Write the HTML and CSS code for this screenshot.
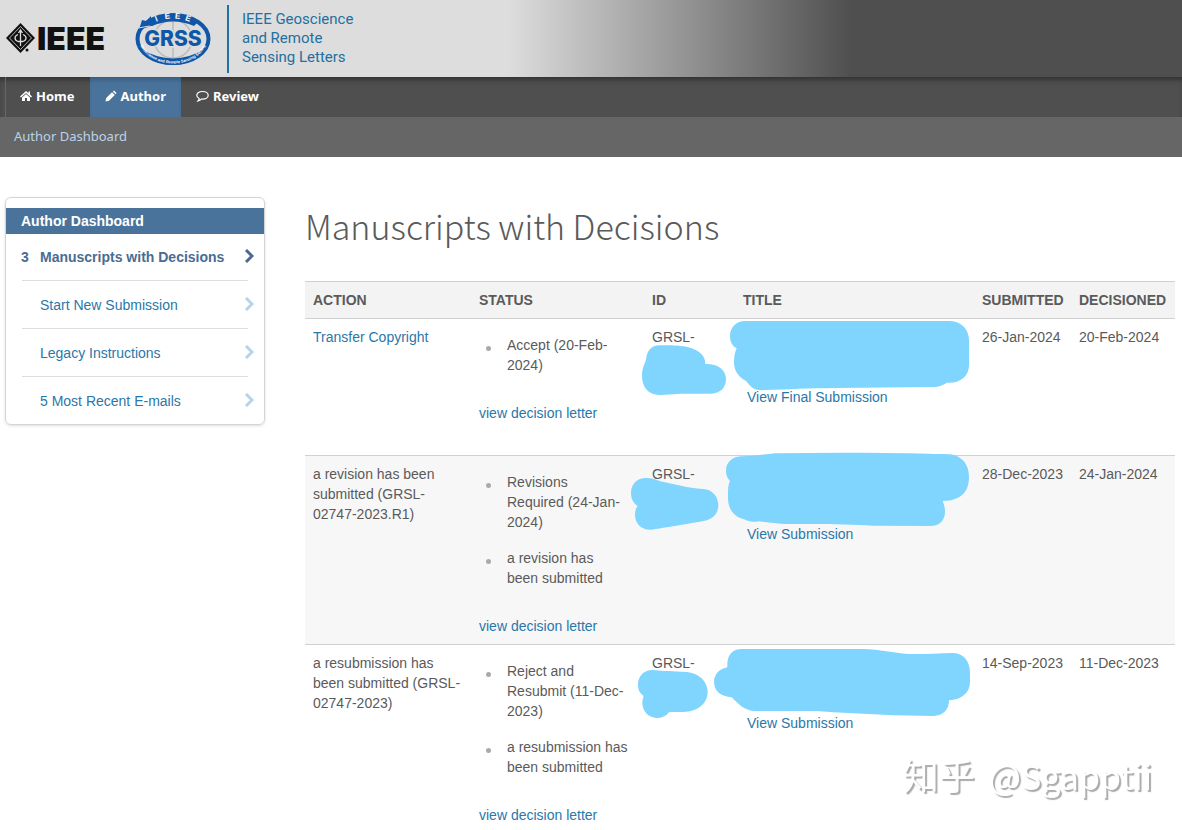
FILE: index.html
```html
<!DOCTYPE html>
<html lang="en">

<head>
    <meta charset="UTF-8">
    <meta name="viewport" content="width=device-width, initial-scale=1.0">
    <title>Manuscripts with Decisions</title>
    <link rel="stylesheet" href="styles.css">
</head>

<body>
    <header class="banner">
        <svg class="ieee-logo" width="106" height="44" viewBox="0 -5 106 44" role="img" aria-label="IEEE">
            <path d="M15.500 1 L30 16 L15.500 31 L1 16 Z" fill="#111"/>
            <path d="M15.500 4.500 L26.500 16 L15.500 27.500 L4.500 16 Z" fill="none" stroke="#ddd" stroke-width="0.800"/>
            <path d="M15.500 9 V24 M13.500 11 L15.500 8 L17.500 11 M13 12.500 C9 14 9 18 13 19.500 L18 19.500 C22 18 22 14 18 12.500" fill="none" stroke="#ddd" stroke-width="1.300"/>
            <circle cx="22" cy="28" r="1.500" fill="#111"/>
            <text class="ieee-text" x="32" y="28">IEEE</text>
        </svg>
        <svg class="grss-logo" width="78" height="56" viewBox="0 0 78 56" role="img" aria-label="GRSS">
            <defs>
                <path id="arc-top" d="M9 27 A30 19.500 0 0 1 69 27"/>
                <path id="arc-bottom" d="M5 27 A34 25.500 0 0 0 73 27"/>
            </defs>
            <ellipse cx="39" cy="28" rx="35.500" ry="24" fill="#ddd" stroke="#1057a7" stroke-width="4"/>
            <g fill="none" stroke="#bbb" stroke-width="1.500">
                <ellipse cx="39" cy="28" rx="19" ry="19"/>
                <path d="M39 8 V48 M20 28 H58"/>
            </g>
            <path d="M14 11 Q39 -2 64 11 L60 15 Q39 6 18 15 Z" fill="#1057a7"/>
            <path d="M5 19 L8 9 L12 10 L17 5 L17 11 L20 14 Z" fill="#1057a7"/>
            <path d="M4 17 L16 15" stroke="#ddd" stroke-width="1"/>
            <path d="M6 37 Q39 58 72 37 Q62 53 39 54 Q16 53 6 37 Z" fill="#1057a7"/>
            <text class="arc-text"><textPath href="#arc-top" startOffset="50%" text-anchor="middle">I&#160; &#160;E&#160; E&#160; E</textPath></text>
            <text class="grss-text" x="39" y="35" text-anchor="middle">GRSS</text>
            <text class="arc-small"><textPath href="#arc-bottom" startOffset="50%" text-anchor="middle">Geoscience and Remote Sensing Society</textPath></text>
        </svg>
        <div class="journal">IEEE Geoscience<br>and Remote<br>Sensing Letters</div>
    </header>

    <nav class="main-nav">
        <a class="nav-item" href="#">
            <svg width="12" height="12" viewBox="0 0 12 12"><path d="M6 1 L0 6.500 L1 7.500 L6 3 L11 7.500 L12 6.500 L10 4.500 V1.500 H8.500 V3.200 Z M6 4 L2 7.500 V11 H5 V8 H7 V11 H10 V7.500 Z" fill="currentColor"/></svg>
            Home
        </a>
        <a class="nav-item active" href="#">
            <svg width="12" height="12" viewBox="0 0 12 12"><path d="M0.500 11.500 L1.200 8 L7 2.200 L9.800 5 L4 10.800 Z M7.800 1.400 L9 0.500 L11.500 3 L10.600 4.200 Z" fill="currentColor"/></svg>
            Author
        </a>
        <a class="nav-item" href="#">
            <svg width="13" height="12" viewBox="0 0 13 12"><path d="M6.500 1.500 C9.800 1.500 12.200 3.200 12.200 5.300 C12.200 7.500 9.800 9.200 6.500 9.200 L5.300 9.100 Q4 10.600 2 11 Q3.200 9.600 3.100 8.500 C1.600 7.800 0.800 6.600 0.800 5.300 C0.800 3.200 3.200 1.500 6.500 1.500 Z" fill="none" stroke="currentColor" stroke-width="1.200"/></svg>
            Review
        </a>
    </nav>
    <div class="sub-nav"><a href="#">Author Dashboard</a></div>

    <div class="page">
        <aside class="sidebar">
            <h2>Author Dashboard</h2>
            <ul class="queue-list">
                <li><a class="current" href="#"><span class="count">3</span><span class="label">Manuscripts with Decisions</span><svg width="10" height="14" viewBox="0 0 10 14"><path d="M2 1 L8 7 L2 13"/></svg></a></li>
                <li><a href="#"><span class="count"></span><span class="label">Start New Submission</span><svg width="10" height="14" viewBox="0 0 10 14"><path d="M2 1 L8 7 L2 13"/></svg></a></li>
                <li><a href="#"><span class="count"></span><span class="label">Legacy Instructions</span><svg width="10" height="14" viewBox="0 0 10 14"><path d="M2 1 L8 7 L2 13"/></svg></a></li>
                <li><a href="#"><span class="count"></span><span class="label">5 Most Recent E-mails</span><svg width="10" height="14" viewBox="0 0 10 14"><path d="M2 1 L8 7 L2 13"/></svg></a></li>
            </ul>
        </aside>

        <main class="content">
            <h1>Manuscripts with Decisions</h1>
            <table class="manuscripts">
                <colgroup>
                    <col class="col-action">
                    <col class="col-status">
                    <col class="col-id">
                    <col>
                    <col class="col-submitted">
                    <col class="col-decisioned">
                </colgroup>
                <thead>
                    <tr>
                        <th>ACTION</th>
                        <th>STATUS</th>
                        <th>ID</th>
                        <th>TITLE</th>
                        <th>SUBMITTED</th>
                        <th>DECISIONED</th>
                    </tr>
                </thead>
                <tbody>
                    <tr>
                        <td><a href="#">Transfer Copyright</a></td>
                        <td>
                            <ul class="status-list">
                                <li>Accept (20-Feb-2024)</li>
                            </ul>
                            <a href="#">view decision letter</a>
                        </td>
                        <td>
                            GRSL-
                            <div class="hidden-id">
                                <svg width="100" height="60" viewBox="24 81 300 180"><path d="M118 106 C160 105 190 106 215 115 C240 124 256 138 256 162 C290 160 318 178 318 207 C318 236 298 251 270 251 L180 251 C150 253 130 256 110 254 C82 251 66 228 66 198 C66 175 73 163 78 150 C80 122 94 107 118 106 Z"/></svg>
                            </div>
                        </td>
                        <td>
                            <div class="hidden-title">
                                <svg width="260" height="90" viewBox="279 9 780 270"><path d="M376 33 H986 C1022 33 1047 56 1047 90 V165 C1047 198 1022 221 980 218 C965 228 955 231 935 231 L650 234 C570 235 500 238 435 240 C402 244 392 230 378 213 C354 200 342 180 342 158 C342 140 344 128 350 115 C335 106 330 94 330 78 C330 52 348 33 376 33 Z"/></svg>
                            </div>
                            <a class="view-link" href="#">View Final Submission</a>
                        </td>
                        <td>26-Jan-2024</td>
                        <td>20-Feb-2024</td>
                    </tr>
                    <tr>
                        <td>a revision has been submitted (GRSL-02747-2023.R1)</td>
                        <td>
                            <ul class="status-list">
                                <li>Revisions Required (24-Jan-2024)</li>
                                <li>a revision has been submitted</li>
                            </ul>
                            <a href="#">view decision letter</a>
                        </td>
                        <td>
                            GRSL-
                            <div class="hidden-id">
                                <svg width="100" height="60" viewBox="24 87 300 180"><path d="M78 99 C100 98 115 108 135 112 L200 126 C220 130 235 131 250 132 C278 134 295 155 295 181 C295 206 278 222 252 228 L160 244 C130 248 112 253 92 254 C64 255 45 236 45 210 C45 198 47 190 53 183 C38 172 33 160 33 143 C33 117 52 99 78 99 Z"/></svg>
                            </div>
                        </td>
                        <td>
                            <div class="hidden-title">
                                <svg width="260" height="90" viewBox="279 15 780 270"><path d="M366 34 C400 33 430 28 465 25 C620 22 780 23 930 26 C960 28 970 26 990 28 C1025 32 1047 58 1047 95 C1047 140 1025 166 968 168 C972 178 975 188 975 200 C975 224 960 243 930 243 L760 242 C700 239 640 237 590 237 L490 237 L415 229 C398 233 385 229 372 223 C340 215 324 190 324 160 C324 140 323 122 330 108 C320 98 318 88 318 76 C318 52 338 34 366 34 Z"/></svg>
                            </div>
                            <a class="view-link" href="#">View Submission</a>
                        </td>
                        <td>28-Dec-2023</td>
                        <td>24-Jan-2024</td>
                    </tr>
                    <tr>
                        <td>a resubmission has been submitted (GRSL-02747-2023)</td>
                        <td>
                            <ul class="status-list">
                                <li>Reject and Resubmit (11-Dec-2023)</li>
                                <li>a resubmission has been submitted</li>
                            </ul>
                            <a href="#">view decision letter</a>
                        </td>
                        <td>
                            GRSL-
                            <div class="hidden-id">
                                <svg width="100" height="60" viewBox="24 69 300 180"><path d="M98 90 C130 93 160 94 200 96 C236 99 263 124 263 156 C263 190 234 215 190 216 L148 216 C138 228 126 234 110 234 C84 233 68 214 67 190 C67 180 69 174 71 168 C58 158 54 148 54 134 C54 108 72 90 98 90 Z"/></svg>
                            </div>
                        </td>
                        <td>
                            <div class="hidden-title">
                                <svg width="260" height="90" viewBox="279 -3 780 270"><path d="M366 27 H730 C780 29 820 38 865 42 C910 43 950 40 1000 39 C1032 41 1050 64 1050 98 V125 C1050 158 1026 178 987 181 C987 210 970 227 940 228 L820 226 L640 217 L590 213 H405 C375 213 358 195 335 172 C302 170 282 152 282 126 C282 102 300 86 322 82 C320 48 334 27 366 27 Z"/></svg>
                            </div>
                            <a class="view-link" href="#">View Submission</a>
                        </td>
                        <td>14-Sep-2023</td>
                        <td>11-Dec-2023</td>
                    </tr>
                </tbody>
            </table>
        </main>
    </div>

    <div class="watermark">知乎 <span>@Sgapptii</span></div>
</body>

</html>
```

FILE: styles.css
```css
body {
    margin: 0;
    font-family: "Liberation Sans", Arial, sans-serif;
    font-size: 14px;
    line-height: 20px;
    color: #5a5a5a;
    background-color: #fff;
}

a {
    color: #2a77a9;
    text-decoration: none;
}

.banner {
    display: flex;
    align-items: center;
    height: 77px;
    padding-left: 5px;
    background: linear-gradient(to right, #ddd 43%, #4f4f4f 72%);
}

.grss-logo {
    margin-left: 23px;
}

.ieee-text {
    font-family: Inter, sans-serif;
    font-size: 32px;
    font-weight: 900;
    fill: #111;
}

.grss-text {
    font-family: Inter, sans-serif;
    font-size: 21px;
    font-weight: 800;
    fill: #1057a7;
    stroke: #ddd;
    stroke-width: 3px;
    paint-order: stroke;
}

.arc-text {
    font-size: 8px;
    font-weight: bold;
    fill: #fff;
}

.arc-small {
    font-size: 4px;
    font-weight: bold;
    fill: #fff;
}

.journal {
    margin-left: 15px;
    padding: 5px 0 6px 13px;
    border-left: 2px solid #23709f;
    font-family: Roboto, Arial, sans-serif;
    font-size: 15px;
    line-height: 19px;
    color: #23709f;
}

.main-nav {
    display: flex;
    height: 40px;
    padding-left: 5px;
    background-color: #4f4f4f;
    box-shadow: inset 0 5px 5px -2px #333;
}

.nav-item {
    display: flex;
    align-items: center;
    gap: 4px;
    padding: 0 15px 2px;
    font-family: "Noto Sans", sans-serif;
    font-size: 13px;
    font-weight: bold;
    color: #fff;
}

.nav-item:first-child {
    padding-left: 14px;
    border-left: 1px solid #666;
}

.nav-item.active {
    background-color: #4a739b;
    box-shadow: inset 0 5px 5px -2px #3a5c80;
}

.sub-nav {
    padding: 9px 14px 11px;
    background-color: #666;
    font-family: "Noto Sans", sans-serif;
    font-size: 13px;
}

.sub-nav a {
    color: #b9d4e8;
}

.page {
    display: flex;
    align-items: flex-start;
    gap: 40px;
    padding: 40px 7px 0 5px;
}

.sidebar {
    flex: 0 0 258px;
    padding-top: 10px;
    border: 1px solid #d5d5d5;
    border-radius: 6px;
    box-shadow: 0 1px 3px #ddd;
}

.sidebar h2 {
    margin: 0;
    padding: 3px 15px;
    font-size: 14px;
    color: #fff;
    background-color: #4a739b;
}

.queue-list {
    margin: -1px 0 0;
    padding: 0 16px;
    list-style: none;
}

.queue-list li + li {
    border-top: 1px solid #ddd;
}

.queue-list a {
    display: flex;
    align-items: center;
    height: 47px;
    margin: 0 -6px 0 -1px;
}

.queue-list .count {
    width: 19px;
}

.queue-list .label {
    flex: 1;
}

.queue-list svg {
    margin-bottom: 2px;
    fill: none;
    stroke: #b5d5e8;
    stroke-width: 3px;
}

.queue-list .current {
    font-weight: bold;
    color: #4a6c92;
}

.queue-list .current svg {
    stroke: #4a6c92;
}

.content {
    flex: 1;
}

.content h1 {
    margin: 9px 0 35px;
    font-family: "Noto Sans CJK SC", sans-serif;
    font-size: 34px;
    font-weight: 200;
    line-height: 40px;
}

.manuscripts {
    width: 100%;
    table-layout: fixed;
    border-collapse: collapse;
}

.col-action {
    width: 166px;
}

.col-status {
    width: 173px;
}

.col-id {
    width: 91px;
}

.col-submitted {
    width: 97px;
}

.col-decisioned {
    width: 104px;
}

.manuscripts th,
.manuscripts td {
    padding: 8px;
    text-align: left;
    vertical-align: top;
    border-top: 1px solid #d0d0d0;
}

.manuscripts th {
    background-color: #f3f3f3;
}

.manuscripts tbody tr {
    height: 137px;
}

.manuscripts tbody tr:nth-child(even) {
    background-color: #f7f7f7;
}

.status-list {
    margin: 0 0 20px;
    padding: 0;
    list-style: none;
}

.status-list li {
    display: flex;
    padding: 8px 8px 8px 7px;
}

.status-list li::before {
    content: "";
    flex: 0 0 5px;
    height: 5px;
    margin: 11px 16px 0 0;
    border-radius: 50%;
    background-color: #aaa;
}

/* painted-over ids and titles */
.hidden-id,
.hidden-title {
    position: relative;
}

.hidden-title {
    height: 60px;
}

.hidden-id svg,
.hidden-title svg {
    position: absolute;
    fill: #80d5ff;
}

.hidden-id svg {
    top: -10px;
    left: -24px;
}

.hidden-title svg {
    top: -14px;
    left: -30px;
}

.view-link {
    position: relative;
    padding-left: 4px;
}

.watermark {
    position: fixed;
    right: 30px;
    bottom: 34px;
    font-family: "Noto Sans CJK SC", sans-serif;
    font-size: 36px;
    line-height: 40px;
    color: #fff;
    text-shadow: 2px 2px 1px #aaa;
}

.watermark span {
    margin-left: 6px;
    font-size: 34px;
}
```
